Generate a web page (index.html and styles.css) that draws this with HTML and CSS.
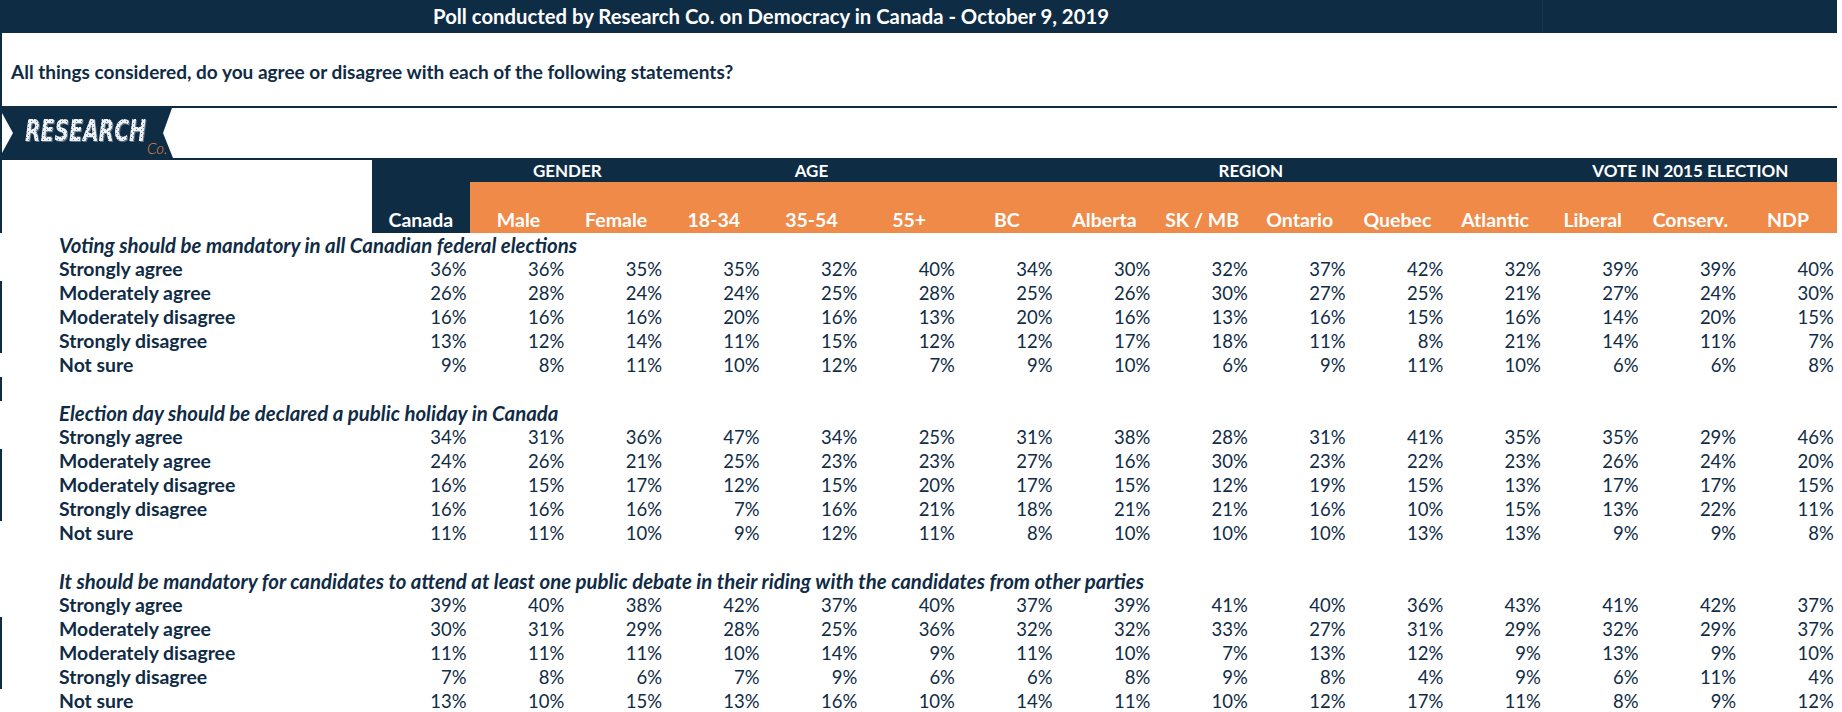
FILE: index.html
```html
<!DOCTYPE html>
<html lang="en">
<head>
<meta charset="utf-8">
<title>Poll conducted by Research Co. on Democracy in Canada</title>
<link rel="stylesheet" href="styles.css">
</head>
<body>
<div class="sheet">
  <div class="topbar">
    <div class="title">Poll conducted by Research Co. on Democracy in Canada - October 9, 2019</div>
    <div class="rest"></div>
  </div>
  <div class="question">All things considered, do you agree or disagree with each of the following statements?</div>
  <div class="logo-row">
    <svg class="logo" width="176" height="50" viewBox="0 0 176 50">
      <defs>
        <pattern id="speck" width="5" height="4" patternUnits="userSpaceOnUse">
          <rect class="speck-bg" x="0" y="0" width="5" height="4"/>
          <rect class="speck-dot" x="1" y="1" width="1" height="1"/>
          <rect class="speck-dot" x="3" y="3" width="1" height="1"/>
        </pattern>
      </defs>
      <polygon class="logo-bg" points="0,0 172,0 163,25 173,50 0,50"/>
      <polygon class="logo-notch" points="2,5 13,25 2,45"/>
      <text class="logo-word" x="25" y="33" textLength="121" lengthAdjust="spacingAndGlyphs">RESEARCH</text>
      <text class="logo-co" x="147" y="46">Co.</text>
    </svg>
  </div>

  <div class="grid head">
    <div class="h-blank"></div>
    <div class="h-canada">Canada</div>
    <div class="h-group span2">GENDER</div>
    <div class="h-group span3">AGE</div>
    <div class="h-group span6">REGION</div>
    <div class="h-group span3">VOTE IN 2015 ELECTION</div>
    <div class="h-col">Male</div>
    <div class="h-col">Female</div>
    <div class="h-col">18-34</div>
    <div class="h-col">35-54</div>
    <div class="h-col">55+</div>
    <div class="h-col">BC</div>
    <div class="h-col">Alberta</div>
    <div class="h-col">SK / MB</div>
    <div class="h-col">Ontario</div>
    <div class="h-col">Quebec</div>
    <div class="h-col">Atlantic</div>
    <div class="h-col">Liberal</div>
    <div class="h-col">Conserv.</div>
    <div class="h-col">NDP</div>
  </div>

  <div class="grid body">
    <div class="sec">Voting should be mandatory in all Canadian federal elections</div>
    <div class="lab">Strongly agree</div><div class="n">36%</div><div class="n">36%</div><div class="n">35%</div><div class="n">35%</div><div class="n">32%</div><div class="n">40%</div><div class="n">34%</div><div class="n">30%</div><div class="n">32%</div><div class="n">37%</div><div class="n">42%</div><div class="n">32%</div><div class="n">39%</div><div class="n">39%</div><div class="n">40%</div>
    <div class="lab mark">Moderately agree</div><div class="n">26%</div><div class="n">28%</div><div class="n">24%</div><div class="n">24%</div><div class="n">25%</div><div class="n">28%</div><div class="n">25%</div><div class="n">26%</div><div class="n">30%</div><div class="n">27%</div><div class="n">25%</div><div class="n">21%</div><div class="n">27%</div><div class="n">24%</div><div class="n">30%</div>
    <div class="lab mark">Moderately disagree</div><div class="n">16%</div><div class="n">16%</div><div class="n">16%</div><div class="n">20%</div><div class="n">16%</div><div class="n">13%</div><div class="n">20%</div><div class="n">16%</div><div class="n">13%</div><div class="n">16%</div><div class="n">15%</div><div class="n">16%</div><div class="n">14%</div><div class="n">20%</div><div class="n">15%</div>
    <div class="lab mark">Strongly disagree</div><div class="n">13%</div><div class="n">12%</div><div class="n">14%</div><div class="n">11%</div><div class="n">15%</div><div class="n">12%</div><div class="n">12%</div><div class="n">17%</div><div class="n">18%</div><div class="n">11%</div><div class="n">8%</div><div class="n">21%</div><div class="n">14%</div><div class="n">11%</div><div class="n">7%</div>
    <div class="lab">Not sure</div><div class="n">9%</div><div class="n">8%</div><div class="n">11%</div><div class="n">10%</div><div class="n">12%</div><div class="n">7%</div><div class="n">9%</div><div class="n">10%</div><div class="n">6%</div><div class="n">9%</div><div class="n">11%</div><div class="n">10%</div><div class="n">6%</div><div class="n">6%</div><div class="n">8%</div>
    <div class="gap mark"></div>

    <div class="sec">Election day should be declared a public holiday in Canada</div>
    <div class="lab">Strongly agree</div><div class="n">34%</div><div class="n">31%</div><div class="n">36%</div><div class="n">47%</div><div class="n">34%</div><div class="n">25%</div><div class="n">31%</div><div class="n">38%</div><div class="n">28%</div><div class="n">31%</div><div class="n">41%</div><div class="n">35%</div><div class="n">35%</div><div class="n">29%</div><div class="n">46%</div>
    <div class="lab mark">Moderately agree</div><div class="n">24%</div><div class="n">26%</div><div class="n">21%</div><div class="n">25%</div><div class="n">23%</div><div class="n">23%</div><div class="n">27%</div><div class="n">16%</div><div class="n">30%</div><div class="n">23%</div><div class="n">22%</div><div class="n">23%</div><div class="n">26%</div><div class="n">24%</div><div class="n">20%</div>
    <div class="lab mark">Moderately disagree</div><div class="n">16%</div><div class="n">15%</div><div class="n">17%</div><div class="n">12%</div><div class="n">15%</div><div class="n">20%</div><div class="n">17%</div><div class="n">15%</div><div class="n">12%</div><div class="n">19%</div><div class="n">15%</div><div class="n">13%</div><div class="n">17%</div><div class="n">17%</div><div class="n">15%</div>
    <div class="lab mark">Strongly disagree</div><div class="n">16%</div><div class="n">16%</div><div class="n">16%</div><div class="n">7%</div><div class="n">16%</div><div class="n">21%</div><div class="n">18%</div><div class="n">21%</div><div class="n">21%</div><div class="n">16%</div><div class="n">10%</div><div class="n">15%</div><div class="n">13%</div><div class="n">22%</div><div class="n">11%</div>
    <div class="lab">Not sure</div><div class="n">11%</div><div class="n">11%</div><div class="n">10%</div><div class="n">9%</div><div class="n">12%</div><div class="n">11%</div><div class="n">8%</div><div class="n">10%</div><div class="n">10%</div><div class="n">10%</div><div class="n">13%</div><div class="n">13%</div><div class="n">9%</div><div class="n">9%</div><div class="n">8%</div>
    <div class="gap"></div>

    <div class="sec">It should be mandatory for candidates to attend at least one public debate in their riding with the candidates from other parties</div>
    <div class="lab">Strongly agree</div><div class="n">39%</div><div class="n">40%</div><div class="n">38%</div><div class="n">42%</div><div class="n">37%</div><div class="n">40%</div><div class="n">37%</div><div class="n">39%</div><div class="n">41%</div><div class="n">40%</div><div class="n">36%</div><div class="n">43%</div><div class="n">41%</div><div class="n">42%</div><div class="n">37%</div>
    <div class="lab mark">Moderately agree</div><div class="n">30%</div><div class="n">31%</div><div class="n">29%</div><div class="n">28%</div><div class="n">25%</div><div class="n">36%</div><div class="n">32%</div><div class="n">32%</div><div class="n">33%</div><div class="n">27%</div><div class="n">31%</div><div class="n">29%</div><div class="n">32%</div><div class="n">29%</div><div class="n">37%</div>
    <div class="lab mark">Moderately disagree</div><div class="n">11%</div><div class="n">11%</div><div class="n">11%</div><div class="n">10%</div><div class="n">14%</div><div class="n">9%</div><div class="n">11%</div><div class="n">10%</div><div class="n">7%</div><div class="n">13%</div><div class="n">12%</div><div class="n">9%</div><div class="n">13%</div><div class="n">9%</div><div class="n">10%</div>
    <div class="lab mark">Strongly disagree</div><div class="n">7%</div><div class="n">8%</div><div class="n">6%</div><div class="n">7%</div><div class="n">9%</div><div class="n">6%</div><div class="n">6%</div><div class="n">8%</div><div class="n">9%</div><div class="n">8%</div><div class="n">4%</div><div class="n">9%</div><div class="n">6%</div><div class="n">11%</div><div class="n">4%</div>
    <div class="lab">Not sure</div><div class="n">13%</div><div class="n">10%</div><div class="n">15%</div><div class="n">13%</div><div class="n">16%</div><div class="n">10%</div><div class="n">14%</div><div class="n">11%</div><div class="n">10%</div><div class="n">12%</div><div class="n">17%</div><div class="n">11%</div><div class="n">8%</div><div class="n">9%</div><div class="n">12%</div>
  </div>
</div>
</body>
</html>
```

FILE: styles.css
```css
* { box-sizing: border-box; }

body {
  margin: 0;
  background: #ffffff;
  color: #0f2b45;
  font-family: Lato, "Liberation Sans", sans-serif;
}

.sheet {
  width: 1837px;
}

.topbar {
  display: flex;
  height: 33px;
  background: #0f2c45;
  color: #ffffff;
}

.topbar .title {
  width: 1542px;
  text-align: center;
  font-weight: 700;
  font-size: 20.3px;
  line-height: 33px;
  white-space: nowrap;
}

.topbar .rest {
  flex: 1;
  border-left: 1px solid #143350;
}

.question {
  height: 75px;
  display: flex;
  align-items: center;
  padding-left: 9px;
  padding-top: 3px;
  border-left: 2px solid #0f2c45;
  border-bottom: 2px solid #0f2c45;
  font-weight: 700;
  font-size: 19px;
  white-space: nowrap;
}

.logo-row {
  height: 52px;
  border-bottom: 2px solid #0f2c45;
}

.logo {
  display: block;
}

.logo-bg { fill: #0f2c45; }
.logo-notch { fill: #ffffff; }

.logo-word {
  font-family: "DejaVu Sans", sans-serif;
  font-weight: 700;
  font-style: italic;
  font-size: 30px;
  fill: url(#speck);
  filter: drop-shadow(1.5px 1px 0 #5d7184);
}

.speck-bg { fill: #eef1f3; }
.speck-dot { fill: #6a7d8e; }

.logo-co {
  font-family: Lato, "DejaVu Sans", sans-serif;
  font-style: italic;
  font-weight: 300;
  font-size: 15px;
  fill: #e9873d;
}

.grid {
  display: grid;
  grid-template-columns: 372px repeat(15, 97.67px);
}

.head {
  grid-template-rows: 22px 51px;
  color: #ffffff;
  font-weight: 700;
  font-size: 19.5px;
}

.h-blank {
  grid-row: 1 / 3;
  box-shadow: inset 2px 0 #0f2c45;
}

.h-canada {
  grid-row: 1 / 3;
  background: #0f2c45;
  display: flex;
  align-items: flex-end;
  justify-content: center;
  padding-bottom: 1px;
  line-height: 24px;
}

.h-group {
  background: #0f2c45;
  text-align: center;
  line-height: 22px;
  font-size: 17px;
  white-space: nowrap;
}

.span2 { grid-column: span 2; }
.span3 { grid-column: span 3; }
.span6 { grid-column: span 6; }

.h-col {
  background: #f08a48;
  display: flex;
  align-items: flex-end;
  justify-content: center;
  padding-bottom: 1px;
  line-height: 24px;
  white-space: nowrap;
}

.body {
  grid-auto-rows: 24px;
  font-size: 18.5px;
  line-height: 24px;
}

.sec {
  grid-column: 1 / -1;
  padding-left: 59px;
  font-weight: 700;
  font-style: italic;
  font-size: 20.4px;
  white-space: nowrap;
}

.lab {
  padding-left: 59px;
  font-weight: 700;
  font-size: 19.4px;
  white-space: nowrap;
}

.mark {
  box-shadow: inset 2px 0 #0f2c45;
}

.gap {
  grid-column: 1 / -1;
}

.n {
  text-align: right;
  padding-right: 3px;
}
```
